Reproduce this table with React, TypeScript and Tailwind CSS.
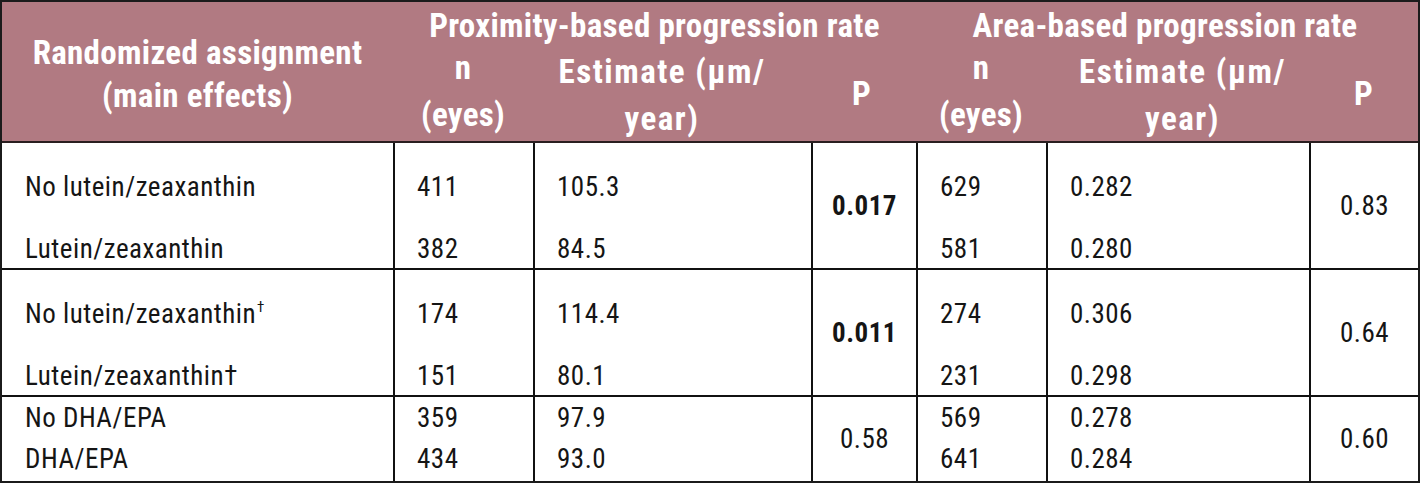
import React from 'react';

const cols = 'grid grid-cols-[391px_140px_278px_105px_130px_263px_109px]';

interface GroupRow {
  labels: React.ReactNode[];
  n1: string[];
  est1: string[];
  p1: string;
  p1Bold?: boolean;
  n2: string[];
  est2: string[];
  p2: string;
}

const rows: GroupRow[] = [
  {
    labels: ['No lutein/zeaxanthin', 'Lutein/zeaxanthin'],
    n1: ['411', '382'],
    est1: ['105.3', '84.5'],
    p1: '0.017',
    p1Bold: true,
    n2: ['629', '581'],
    est2: ['0.282', '0.280'],
    p2: '0.83',
  },
  {
    labels: [
      <>
        No lutein/zeaxanthin<sup className="text-[15px] top-[-11px] ml-[1px]">†</sup>
      </>,
      'Lutein/zeaxanthin†',
    ],
    n1: ['174', '151'],
    est1: ['114.4', '80.1'],
    p1: '0.011',
    p1Bold: true,
    n2: ['274', '231'],
    est2: ['0.306', '0.298'],
    p2: '0.64',
  },
  {
    labels: ['No DHA/EPA', 'DHA/EPA'],
    n1: ['359', '434'],
    est1: ['97.9', '93.0'],
    p1: '0.58',
    n2: ['569', '641'],
    est2: ['0.278', '0.284'],
    p2: '0.60',
  },
];

const Lines: React.FC<{ items: React.ReactNode[]; tight?: boolean; first?: boolean }> = ({
  items,
  tight,
  first,
}) => (
  <div
    className={`flex flex-col ${first ? '' : 'border-l-2 border-[#111]'} ${
      tight ? 'pt-[1px] gap-[1px]' : 'pt-[24px] gap-[22px]'
    } ${first ? 'pl-[23px]' : 'pl-[22px]'}`}
  >
    {items.map((it, i) => (
      <div key={i} className="h-[40px] leading-[40px] whitespace-nowrap">
        {it}
      </div>
    ))}
  </div>
);

const PCell: React.FC<{ value: string; bold?: boolean }> = ({ value, bold }) => (
  <div
    className={`flex items-center justify-center border-l-2 border-[#111] ${
      bold ? 'font-bold' : ''
    }`}
  >
    {value}
  </div>
);

export default function App() {
  return (
    <div className="bg-white w-[1420px] h-[484px] font-['Roboto_Condensed',Roboto,'Liberation_Sans',sans-serif]">
      <div className="border-2 border-[#1b1b1b] w-[1420px]">
        <div className={`${cols} grid-rows-[46px_93px] bg-[#b17a82] text-white font-bold text-[33px] tracking-[0.3px] leading-[43px] border-b-2 border-[#2a1e20]`}>
          <div className="row-span-2 flex flex-col items-center justify-center pt-[4px]">
            <div>Randomized assignment</div>
            <div>(main effects)</div>
          </div>
          <div className="col-span-3 flex items-center justify-center">
            Proximity-based progression rate
          </div>
          <div className="col-span-3 flex items-center justify-center pr-[4px]">
            Area-based progression rate
          </div>
          <div className="flex flex-col items-center justify-center leading-[47px] pb-[8px]">
            <div>n</div>
            <div>(eyes)</div>
          </div>
          <div className="flex flex-col items-center justify-center leading-[47px] pr-[20px] tracking-[1.5px]">
            <div>Estimate (μm/</div>
            <div>year)</div>
          </div>
          <div className="flex items-center justify-center pr-[4px] pb-[2px]">P</div>
          <div className="flex flex-col items-center justify-center leading-[47px] pb-[8px]">
            <div>n</div>
            <div>(eyes)</div>
          </div>
          <div className="flex flex-col items-center justify-center leading-[47px] pl-[10px] tracking-[1.5px]">
            <div>Estimate (μm/</div>
            <div>year)</div>
          </div>
          <div className="flex items-center justify-center pb-[2px]">P</div>
        </div>
        {rows.map((r, i) => {
          const tight = i === 2;
          return (
            <div
              key={i}
              className={`${cols} text-[27px] tracking-[0.5px] text-[#151515] ${i > 0 ? 'border-t-2 border-[#111]' : ''} ${
                tight ? 'h-[86px]' : i === 0 ? 'h-[125px]' : 'h-[127px]'
              }`}
            >
              <Lines items={r.labels} tight={tight} first />
              <Lines items={r.n1} tight={tight} />
              <Lines items={r.est1} tight={tight} />
              <PCell value={r.p1} bold={r.p1Bold} />
              <Lines items={r.n2} tight={tight} />
              <Lines items={r.est2} tight={tight} />
              <PCell value={r.p2} />
            </div>
          );
        })}
      </div>
    </div>
  );
}
